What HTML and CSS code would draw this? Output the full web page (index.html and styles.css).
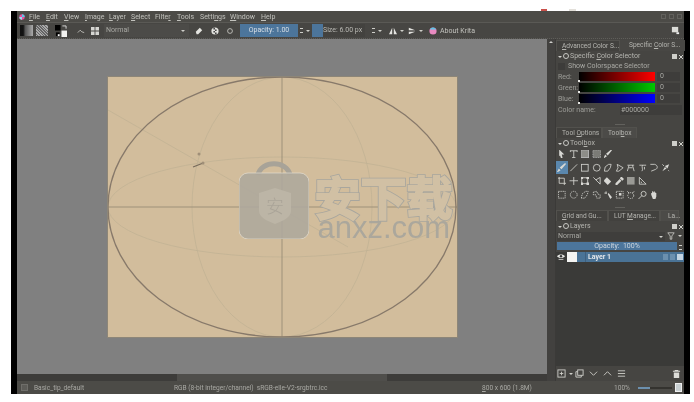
FILE: index.html
```html
<!DOCTYPE html>
<html lang="en">
<head>
<meta charset="utf-8">
<title>Krita</title>
<link rel="stylesheet" href="styles.css">
</head>
<body>
<span class="speck speck-red"></span><span class="speck speck-white"></span>
<div class="screen">
<div class="window">

  <div class="menubar">
    <svg class="logo" viewBox="0 0 10 10"><circle cx="5" cy="5" r="4.5" fill="#e84fa0"/><path d="M5 5V.5A4.5 4.5 0 0 1 9.5 5z" fill="#58c8e8"/><path d="M5 5H.5A4.5 4.5 0 0 0 5 9.5z" fill="#9adcf0"/></svg>
    <span class="menu m-file"><u>F</u>ile</span>
    <span class="menu m-edit"><u>E</u>dit</span>
    <span class="menu m-view"><u>V</u>iew</span>
    <span class="menu m-image"><u>I</u>mage</span>
    <span class="menu m-layer"><u>L</u>ayer</span>
    <span class="menu m-select"><u>S</u>elect</span>
    <span class="menu m-filter">Filte<u>r</u></span>
    <span class="menu m-tools"><u>T</u>ools</span>
    <span class="menu m-settings">Setti<u>n</u>gs</span>
    <span class="menu m-window"><u>W</u>indow</span>
    <span class="menu m-help"><u>H</u>elp</span>
    <span class="mdi-buttons"><i></i><i></i><i></i></span>
  </div>

  <div class="toolbar">
    <span class="swatch-gradient"></span>
    <span class="swatch-pattern"></span>
    <svg class="fgbg" viewBox="0 0 13 13"><rect width="6" height="6" fill="#000"/><rect x="7" y="6" width="6" height="7" fill="#f2f2f0"/><rect x="1" y="8" width="4" height="4" fill="#000"/><rect x="3" y="10" width="2" height="2" fill="#fff"/><path d="M8 1h4v3" fill="none" stroke="#ddd"/></svg>
    <svg class="i t-curve" viewBox="0 0 10 10"><path d="M1 7l3-3 2 2 3 1"/></svg>
    <svg class="t-grid" viewBox="0 0 9 9"><path d="M0 0h4v4H0zM5 0h4v4H5zM0 5h4v4H0zM5 5h4v4H5z" fill="#d6d6d2"/></svg>
    <span class="combo">Normal<b class="caret"></b></span>
    <svg class="t-erase" viewBox="0 0 10 10"><path d="M1 6l5-5 3 3-5 5H2z" fill="#e4e4e0"/></svg>
    <svg class="t-alpha" viewBox="0 0 10 10"><circle cx="5" cy="5" r="4.5" fill="#e4e4e0"/><path d="M3 1h2v2H3zM5 3h2v2H5zM3 5h2v2H3zM5 7h2v2H5z" fill="#444"/></svg>
    <svg class="i t-reload" viewBox="0 0 10 10"><circle cx="5" cy="5" r="3"/></svg>
    <span class="slider s-opacity">Opacity: 1.00</span>
    <span class="spin"></span><b class="caret c-small"></b>
    <span class="slider s-size"><em></em><span>Size: 6.00 px</span></span>
    <span class="spin s2"></span><b class="caret c-small"></b>
    <svg class="t-mirror" viewBox="0 0 10 10"><path d="M4 1v8H0zM6 1v8h4z" fill="#e4e4e0"/></svg><b class="caret c-m"></b>
    <svg class="t-mirror2" viewBox="0 0 10 10"><path d="M1 1l8 3H1zM1 6h8l-8 3z" fill="#e4e4e0"/></svg><b class="caret c-m"></b>
    <svg class="t-about" viewBox="0 0 10 10"><circle cx="5" cy="5" r="4.5" fill="#e88ac0"/><path d="M1 3a4.5 4.5 0 0 1 8 0z" fill="#58c8e8"/></svg>
    <span class="about">About Krita</span>
    <svg class="t-right" viewBox="0 0 10 10"><rect x="1" y="1" width="7" height="6" fill="#dcdcd8"/><path d="M6 7h3v2H6z" fill="#eee"/></svg>
  </div>

  <div class="body">
    <div class="workspace">
      <div class="canvas">
        <div class="page">
          <svg class="strokes" viewBox="0 0 349 260">
            <g class="thin">
              <ellipse cx="174" cy="130" rx="174" ry="50"/>
              <ellipse cx="174" cy="130" rx="90" ry="130"/>
              <path d="M0 33L240 170"/>
            </g>
            <g class="mid">
              <path d="M174 0V260M0 130H349"/>
            </g>
            <ellipse class="main" cx="174" cy="130" rx="174" ry="130"/>
            <path class="mark" d="M85 90l9-3.500"/>
            <circle class="dot" cx="91" cy="77" r="1.500"/>
            <circle class="dot" cx="95" cy="86" r="1.500"/>
          </svg>
          <div class="watermark">
            <svg class="bag" viewBox="0 0 70 80">
              <path class="bag-handle" d="M19 16C22 1 48 1 51 16"/>
              <rect class="bag-body" x="0" y="14" width="70" height="66" rx="9"/>
              <path class="bag-shield" d="M36 29l16 5v18c0 6-8 10-16 13-8-3-16-7-16-13V34z"/>
              <text class="bag-glyph" x="36" y="54">安</text>
            </svg>
            <div class="wm-text">
              <div class="wm-cn" data-t="安下载">安下载</div>
              <div class="wm-en">anxz.com</div>
            </div>
          </div>
        </div>
      </div>
      <div class="hscroll"><span class="hthumb"></span></div>
    </div>

    <div class="vscroll"><b class="up"></b></div>

    <aside class="dock">
      <section class="panel p-color">
        <div class="tabs t-a">
          <span class="tab"><u>A</u>dvanced Color S...</span>
          <span class="tab on">Specific <u>C</u>olor S...</span>
        </div>
        <div class="dock-head"><b class="down"></b><span class="head-ic"></span><span class="head-t">Specific <u>C</u>olor Selector</span><span class="head-btns"><i></i><i class="x"></i></span></div>
        <label class="check"><span class="box"></span>Show Colorspace Selector</label>
        <div class="chan"><span class="lbl">Red:</span><span class="bar red"></span><span class="num">0</span></div>
        <div class="chan"><span class="lbl">Green:</span><span class="bar green"></span><span class="num">0</span></div>
        <div class="chan"><span class="lbl">Blue:</span><span class="bar blue"></span><span class="num">0</span></div>
        <div class="cname"><span>Color name:</span><span class="cinput">#000000</span></div>
      </section>

      <section class="panel p-tools">
        <div class="grip"></div>
        <div class="tabs t-b">
          <span class="tab">Tool <u>O</u>ptions</span>
          <span class="tab on">Tool<u>b</u>ox</span>
        </div>
        <div class="dock-head"><b class="down"></b><span class="head-ic"></span><span class="head-t">Tool<u>b</u>ox</span><span class="head-btns"><i></i><i class="x"></i></span></div>
        <div class="toolgrid">
          <svg class="c" viewBox="0 0 10 10"><path class="f" d="M2 0l6 6H5l1 4-2 0-1-3-1 1z"/></svg>
          <svg class="c" viewBox="0 0 10 10"><path d="M1 1.500h8M5 1.500V9.500M3 9.500h4M1 1v2M9 1v2"/></svg>
          <svg class="c" viewBox="0 0 10 10"><rect class="g1" width="9" height="9" x=".5" y=".5"/></svg>
          <svg class="c" viewBox="0 0 10 10"><rect class="g2" width="9" height="9" x=".5" y=".5"/></svg>
          <svg class="c" viewBox="0 0 10 10"><path class="f" d="M9 0l1 1-5 6-2-2zM2 6l2 2-3 2H0z"/></svg>

          <span class="c r active"><svg viewBox="0 0 10 10"><path class="f" d="M9 0l1 1-5 6-2-2zM2 6l2 2-3 2H0z"/></svg></span>
          <svg class="c" viewBox="0 0 10 10"><path d="M1 9L9 1"/></svg>
          <svg class="c" viewBox="0 0 10 10"><rect x="1" y="1" width="8" height="8"/></svg>
          <svg class="c" viewBox="0 0 10 10"><circle cx="5" cy="5" r="4"/></svg>
          <svg class="c" viewBox="0 0 10 10"><path d="M1 9l1-5 4-3h3L8 5 5 9z"/></svg>
          <svg class="c" viewBox="0 0 10 10"><path d="M2 1l7 4-5 4H1l2-4z"/></svg>
          <svg class="c" viewBox="0 0 10 10"><path d="M1 2h8M3 2L1 9M7 2l2 7M3 5h4"/></svg>
          <svg class="c" viewBox="0 0 10 10"><path d="M1 2h8M5 2c-2 2 1 5-1 7M7 4v3"/></svg>
          <svg class="c" viewBox="0 0 10 10"><path d="M1 1h5c4 1 4 5 1 6L2 9"/></svg>
          <svg class="c" viewBox="0 0 10 10"><path class="f" d="M9 1L4 3l3 3zM4 4L1 9l3-2 2-1z"/><path d="M1 1l2 2M8 8l1 1"/></svg>

          <svg class="c r" viewBox="0 0 10 10"><path d="M2 0v8h8M0 2h8v8"/></svg>
          <svg class="c" viewBox="0 0 10 10"><path d="M5 0v10M0 5h10"/></svg>
          <svg class="c" viewBox="0 0 10 10"><rect x="1.500" y="1.500" width="7" height="7"/><path class="f" d="M0 0h3v3H0zM7 0h3v3H7zM0 7h3v3H0zM7 7h3v3H7z"/></svg>
          <svg class="c" viewBox="0 0 10 10"><path d="M1 1l8 8M4 4l5-3v8"/></svg>
          <svg class="c" viewBox="0 0 10 10"><path class="f" d="M4 1l5 5-4 4-5-5z"/></svg>
          <svg class="c" viewBox="0 0 10 10"><path class="f" d="M7 0l3 3-2 2-3-3zM5 3l2 2-5 5H0v-2z"/></svg>
          <svg class="c" viewBox="0 0 10 10"><rect class="g3" x=".5" y=".5" width="9" height="9"/></svg>
          <svg class="c" viewBox="0 0 10 10"><path d="M1 1v8h8zM3 6v1h1"/></svg>

          <svg class="c r dash" viewBox="0 0 10 10"><rect x="1" y="1" width="8" height="8"/></svg>
          <svg class="c dash" viewBox="0 0 10 10"><circle cx="5" cy="5" r="4"/></svg>
          <svg class="c dash" viewBox="0 0 10 10"><path d="M1 9l1-5 4-3h3L8 5 5 9z"/></svg>
          <svg class="c dash" viewBox="0 0 10 10"><path d="M1 2l4-1 1 3 3 1v4H5L4 5H1z"/></svg>
          <svg class="c" viewBox="0 0 10 10"><path class="f" d="M5 4l1-1 4 5-2 2z"/><path d="M1 3h3M3 1v3"/></svg>
          <svg class="c" viewBox="0 0 10 10"><path class="dashed" d="M1 1h8v8H1z"/><path class="f" d="M4 3h3v3H4z"/></svg>
          <svg class="c" viewBox="0 0 10 10"><circle class="dashed" cx="5" cy="6" r="3.500"/><path d="M1 1l2 2M9 1L7 3"/></svg>
          <svg class="c" viewBox="0 0 10 10"><circle cx="6" cy="4" r="3"/><path d="M4 6L0 10"/></svg>
          <svg class="c" viewBox="0 0 10 10"><path class="f" d="M2 5V3h1V1h1v1h1V1h1v1h1v1h1v4L7 10H4z"/></svg>
        </div>
      </section>

      <section class="panel p-layers">
        <div class="grip"></div>
        <div class="tabs t-c">
          <span class="tab"><u>G</u>rid and Gu...</span>
          <span class="tab">LUT <u>M</u>anage...</span>
          <span class="tab on">La...</span>
        </div>
        <div class="dock-head"><b class="down"></b><span class="head-ic"></span><span class="head-t">Layers</span><span class="head-btns"><i></i><i class="x"></i></span></div>
        <div class="layer-combo"><span class="lc-box">Normal<b class="caret"></b></span><svg class="i lc-filter" viewBox="0 0 10 10"><path d="M1 1h8L6 5v4H4V5z"/></svg><b class="caret c-m"></b></div>
        <div class="layer-op"><span class="op-bar">Opacity:  100%</span><span class="spin s3"></span></div>
        <div class="layer-row">
          <svg class="eye" viewBox="0 0 10 10"><path d="M0 4c2-3 8-3 10 0-2 3-8 3-10 0z" fill="#e6e6e2"/><circle cx="5" cy="4" r="1.500" fill="#333"/><path d="M2 8h6" stroke="#e6e6e2"/></svg>
          <div class="layer-item">
            <span class="thumb"></span><span class="thumb-sep"></span>
            <span class="layer-name">Layer 1</span>
            <span class="layer-ic"><i></i><i></i><i class="bright"></i></span>
          </div>
        </div>
        <div class="layer-list"></div>
        <div class="layer-foot">
          <svg class="i lf1" viewBox="0 0 10 10"><rect x="1" y="1" width="8" height="8"/><path d="M5 3v4M3 5h4"/></svg><b class="caret c-m"></b>
          <svg class="i lf2" viewBox="0 0 10 10"><rect x="3" y="1" width="6" height="6"/><path d="M3 3H1v6h6V7"/></svg>
          <svg class="i lf3" viewBox="0 0 10 10"><path d="M1 3l4 4 4-4"/></svg>
          <svg class="i lf3" viewBox="0 0 10 10"><path d="M1 7l4-4 4 4"/></svg>
          <svg class="i lf3" viewBox="0 0 10 10"><path d="M1 2h8M1 5h8M1 8h8"/></svg>
          <svg class="lf4" viewBox="0 0 10 10"><path d="M3 1h4v1h2v1H1V2h2zM2 4h6v6H2z" fill="#dcdcd8"/></svg>
        </div>
      </section>
    </aside>
  </div>

  <div class="statusbar">
    <span class="st-box"></span>
    <span class="st-brush">Basic_tip_default</span>
    <span class="st-color">RGB (8-bit integer/channel)  sRGB-elle-V2-srgbtrc.icc</span>
    <span class="st-size"><u>8</u>00 x 600 (1.8M)</span>
    <span class="st-zoom">100%</span>
    <span class="st-slider"><i></i></span>
    <span class="st-icon"></span>
  </div>

</div>
</div>
</body>
</html>
```
FILE: styles.css
```css
* { box-sizing: border-box; }
html, body { margin: 0; padding: 0; background: #fff; }
body { width: 694px; height: 402px; overflow: hidden; position: relative; padding: 11px 4px 8px 11px; font-family: Roboto, "Noto Sans", sans-serif; font-size: 7px; color: #bdbdb8; }
u { text-decoration-thickness: .6px; text-underline-offset: 1px; }

.speck { position: absolute; top: 9px; height: 2px; }
.speck-red { left: 541px; width: 6px; background: #c9504a; }
.speck-white { left: 569px; width: 7px; background: #e3e0da; }

.screen { width: 679px; height: 383px; background: #000; padding: 0 6px; }
.window { height: 100%; display: flex; flex-direction: column; background: #4a4946; filter: blur(.4px); }

/* menu */
.menubar { height: 12px; flex: none; display: flex; align-items: center; background: #4c4b47; border-bottom: 1px solid #5a5955; position: relative; }
.logo { width: 6px; height: 6px; margin-left: 2px; }
.menu { color: #c2c2bd; white-space: nowrap; position: absolute; top: 0; line-height: 12px; }
.m-file { left: 12px; }
.m-edit { left: 29px; }
.m-view { left: 47px; }
.m-image { left: 68px; }
.m-layer { left: 92px; }
.m-select { left: 114px; }
.m-filter { left: 138px; }
.m-tools { left: 160px; }
.m-settings { left: 183px; }
.m-window { left: 213px; }
.m-help { left: 244px; }
.mdi-buttons { margin-left: auto; margin-right: 2px; display: flex; gap: 3px; }
.mdi-buttons i { width: 5px; height: 5px; border: 1px solid #62615d; display: block; }

/* toolbar */
.toolbar { height: 16px; flex: none; display: flex; align-items: center; background: #474643; border-bottom: 1px dotted #5f5e5a; }
.swatch-gradient { width: 13px; height: 11px; margin-left: 3px; background: linear-gradient(90deg, #111 0 25%, #555 40%, #aaa 100%); }
.swatch-pattern { width: 12px; height: 11px; margin-left: 3px; background: repeating-linear-gradient(45deg, #aaa 0 1px, #666 1px 2px), #777; }
.fgbg { width: 12px; height: 12px; margin-left: 7px; }
.i { width: 8px; height: 8px; fill: none; stroke: #cfcfca; stroke-width: 1; }
.t-curve { margin-left: 10px; }
.t-grid { width: 8px; height: 8px; margin-left: 6px; }
.combo { width: 85px; height: 13px; margin-left: 5px; padding-left: 2px; line-height: 13px; background: #4c4b48; color: #a9a9a4; position: relative; }
.caret { display: inline-block; width: 0; height: 0; border: 2px solid transparent; border-top: 2.500px solid #cfcfca; border-bottom: 0; }
.combo .caret { position: absolute; right: 4px; top: 6px; }
.t-erase { width: 8px; height: 8px; margin-left: 6px; }
.t-alpha { width: 8px; height: 8px; margin-left: 8px; }
.t-reload { margin-left: 7px; }
.slider { height: 13px; line-height: 13px; text-align: center; color: #d8dfe6; background: #4c759b; }
.s-opacity { width: 58px; margin-left: 6px; }
.spin { width: 5px; height: 11px; margin-left: 1px; position: relative; background: linear-gradient(#cfcfca, #cfcfca) 1px 3px / 3px 1px no-repeat, linear-gradient(#cfcfca, #cfcfca) 1px 7px / 3px 1px no-repeat; }
.c-small { margin-left: 2px; }
.s-size { width: 53px; margin-left: 2px; display: flex; background: #43423f; text-align: left; color: #b8b8b3; }
.s-size em { width: 11px; background: #4c759b; flex: none; }
.s-size span { white-space: nowrap; }
.s2 { margin-left: 6px; }
.t-mirror { width: 8px; height: 8px; margin-left: 7px; }
.c-m { margin-left: 3px; }
.t-mirror2 { width: 8px; height: 8px; margin-left: 4px; }
.t-about { width: 8px; height: 8px; margin-left: 6px; }
.about { margin-left: 3px; color: #c2c2bd; white-space: nowrap; }
.t-right { width: 9px; height: 9px; margin-left: auto; margin-right: 4px; }

/* body */
.body { flex: 1; min-height: 0; display: flex; }
.workspace { width: 530px; flex: none; display: flex; flex-direction: column; }
.canvas { flex: 1; min-height: 0; display: flex; align-items: center; justify-content: center; background: #808080; padding-top: 1px; }
.page { width: 349px; height: 260px; flex: none; position: relative; background: #d2bd9c; outline: 1px solid #8d8678; }
.strokes { display: block; width: 349px; height: 260px; }
.strokes * { fill: none; }
.thin { stroke: #c2b294; stroke-width: .8; }
.mid { stroke: #998c76; stroke-width: .9; }
.main { stroke: #87796a; stroke-width: 1.300; }
.mark { stroke: #75695a; stroke-width: 1.200; }
.strokes .dot { fill: #a08f78; }

.watermark { position: absolute; left: 131px; top: 82px; display: flex; gap: 6px; }
.bag { width: 70px; height: 80px; flex: none; }
.bag-handle { fill: none; stroke: #a8a398; stroke-width: 5; }
.bag-body { fill: #aea89c; fill-opacity: .9; stroke: #e8e4da; stroke-width: .6; }
.bag-shield { fill: #bcb5a6; }
.bag-glyph { font-family: "Noto Sans CJK SC", sans-serif; font-size: 18px; font-weight: 300; text-anchor: middle; fill: #aaa498; }
.wm-text { margin-top: 14px; width: 138px; }
.wm-cn { position: relative; font-family: "Noto Sans CJK SC", sans-serif; font-weight: 700; font-size: 46px; line-height: 45px; white-space: nowrap; color: #a8a69e; -webkit-text-stroke: 3.500px #a8a69e; }
.wm-cn::after { content: attr(data-t); position: absolute; left: 0; top: 0; color: #d1c0a4; -webkit-text-stroke: 1.800px #d1c0a4; }
.wm-en { font-family: "Liberation Sans", sans-serif; font-size: 31px; line-height: 20px; margin-left: 3px; color: #aba79c; white-space: nowrap; }

.hscroll { height: 7px; flex: none; background: #3d3c3a; padding-left: 160px; }
.hthumb { display: block; width: 210px; height: 100%; background: #4f4e4b; }

.vscroll { width: 9px; flex: none; background: #42413f; border-right: 1px solid #3b3a38; padding: 2px 0 0 2px; }
.up { display: block; width: 0; height: 0; border: 2px solid transparent; border-bottom: 2.500px solid #d0d0cc; border-top: 0; }

/* dock */
.dock { flex: 1; min-width: 0; display: flex; flex-direction: column; background: #464542; }
.panel { flex: none; }
.p-color { height: 85px; padding-top: 1px; }
.p-tools { height: 83px; }
.p-layers { flex: 1; min-height: 0; display: flex; flex-direction: column; }
.tabs { height: 11px; display: flex; line-height: 10px; font-size: 6.600px; color: #b5b5b0; white-space: nowrap; flex: none; }
.tab { padding: 0 5px; background: #42413e; border: 1px solid #52514d; border-bottom: 0; }
.tab.on { background: #4c4b48; }
.t-a .tab { width: 64px; }
.t-a .tab.on { width: 65px; padding-left: 9px; background: #484744; border: 0; line-height: 11px; }
.t-b .tab { width: 46px; }
.t-b .tab.on { width: 35px; }
.t-c .tab { width: 52px; }
.t-c .tab.on { width: 19px; padding-left: 7px; }
.grip { height: 3px; flex: none; margin: 0 auto; width: 10px; border-top: 1px solid #62615d; }
.dock-head { height: 10px; flex: none; display: flex; align-items: center; padding-left: 2px; color: #b5b5b0; position: relative; }
.down { width: 0; height: 0; border: 2px solid transparent; border-top: 2.500px solid #d0d0cc; border-bottom: 0; margin-top: 1px; }
.head-ic { width: 6px; height: 6px; border: 1px solid #c8c8c4; border-radius: 50%; margin-left: 1px; }
.head-t { margin-left: 1px; white-space: nowrap; }
.head-btns { margin-left: auto; display: flex; gap: 2px; margin-right: 1px; }
.head-btns i { display: block; width: 5px; height: 5px; background: #cfcfca; }
.head-btns i.x { width: 4px; height: 4px; margin-top: 1px; background: linear-gradient(45deg, transparent 40%, #cfcfca 40% 60%, transparent 60%), linear-gradient(-45deg, transparent 40%, #cfcfca 40% 60%, transparent 60%); }

.check { height: 10px; display: flex; align-items: center; gap: 3px; padding-left: 2px; color: #a9a9a4; white-space: nowrap; }
.box { width: 7px; height: 7px; background: #3d3c3a; }
.chan { height: 11px; display: flex; align-items: center; padding-left: 2px; color: #9d9d98; }
.lbl { width: 21px; }
.bar { width: 76px; height: 9px; position: relative; }
.bar::after { content: ""; position: absolute; left: -1px; bottom: -1px; width: 2px; height: 2px; background: #e6e6e2; }
.red { background: linear-gradient(90deg, #000, #ff0000); }
.green { background: linear-gradient(90deg, #000, #00c800); }
.blue { background: linear-gradient(90deg, #000, #0000ff); }
.num { width: 23px; height: 9px; margin-left: 2px; padding-left: 3px; line-height: 9px; background: #3e3d3b; color: #a9a9a4; }
.cname { height: 11px; display: flex; align-items: center; padding-left: 2px; color: #9d9d98; justify-content: space-between; }
.cinput { width: 62px; height: 10px; padding-left: 1px; margin-right: 2px; line-height: 10px; background: #3e3d3b; color: #a9a9a4; }

.toolgrid { display: grid; grid-template-columns: repeat(11, 11.500px); grid-auto-rows: 13.500px; margin-top: -1px; }
.toolgrid .c { width: 11.500px; height: 13.500px; padding: 2.500px 1.500px; fill: none; stroke: #d4d4d0; stroke-width: 1; display: block; }
.toolgrid .f { fill: #d8d8d4; stroke: none; }
.toolgrid .g1 { fill: #8d8d88; stroke: #bbb; }
.toolgrid .g2 { fill: #7b7b76; stroke: #bbb; stroke-dasharray: 1 1; }
.toolgrid .g3 { fill: #9a9a95; stroke: none; }
.toolgrid .dash, .toolgrid .dashed { stroke-dasharray: 1.500 1; }
.toolgrid .r { grid-column: 1; }
.toolgrid .active { background: #5a87ad; padding: 0; display: flex; align-items: center; justify-content: center; }
.active svg { width: 9px; height: 9px; }

.layer-combo { height: 10px; display: flex; align-items: center; margin: 0 0 0 1px; flex: none; }
.lc-box { width: 108px; height: 9px; line-height: 9px; padding-left: 1px; background: #3f3e3c; position: relative; color: #a9a9a4; }
.lc-box .caret { position: absolute; right: 2px; top: 4px; }
.lc-filter { margin-left: 2px; }
.layer-op { height: 8px; margin: 1px 0 0 1px; display: flex; flex: none; }
.op-bar { width: 120px; height: 8px; line-height: 8px; background: #4c759b; color: #cdd6de; text-align: center; white-space: pre; }
.s3 { height: 8px; margin-left: 1px; }
.layer-row { height: 10px; flex: none; margin-top: 2px; display: flex; background: #3a3a38; }
.eye { width: 8px; height: 8px; margin: 1px 2px 0 1px; flex: none; }
.layer-item { flex: 1; display: flex; align-items: center; background: #4a7396; color: #e2e6ea; font-weight: 700; }
.thumb { width: 10px; height: 10px; background: #f4f4f2; }
.thumb-sep { width: 1px; height: 10px; margin-left: 8px; background: #3f6080; }
.layer-name { margin-left: 2px; white-space: nowrap; }
.layer-ic { margin-left: auto; display: flex; gap: 2px; padding-right: 1px; }
.layer-ic i { width: 5px; height: 6px; background: #6c90ae; display: block; }
.layer-ic i.bright { width: 6px; background: #c3d3e0; }
.layer-list { flex: 1; min-height: 0; background: #3a3a38; }
.layer-foot { height: 15px; flex: none; display: flex; align-items: center; padding-left: 1px; background: #464542; }
.lf1 { width: 9px; height: 9px; }
.lf2 { width: 9px; height: 9px; margin-left: 2px; }
.lf3 { width: 9px; height: 9px; margin-left: 5px; }
.lf4 { width: 9px; height: 9px; margin-left: auto; margin-right: 3px; }

/* status bar */
.statusbar { height: 13px; flex: none; display: flex; align-items: center; background: #4c4b47; color: #a9a9a4; font-size: 6.600px; position: relative; white-space: pre; }
.st-box { width: 7px; height: 7px; margin-left: 4px; background: #5d5c58; border: 1px solid #6f6e6a; }
.st-brush { margin-left: 6px; }
.st-color { position: absolute; left: 157px; }
.st-size { position: absolute; left: 465px; }
.st-zoom { position: absolute; left: 597px; }
.st-slider { position: absolute; left: 621px; width: 34px; height: 2px; top: 6px; background: #34332f; }
.st-slider i { display: block; width: 12px; height: 2px; background: #6c90ae; }
.st-icon { margin-left: auto; margin-right: 2px; width: 7px; height: 9px; background: #c8d0d2; border: 1px solid #eee; }
```
